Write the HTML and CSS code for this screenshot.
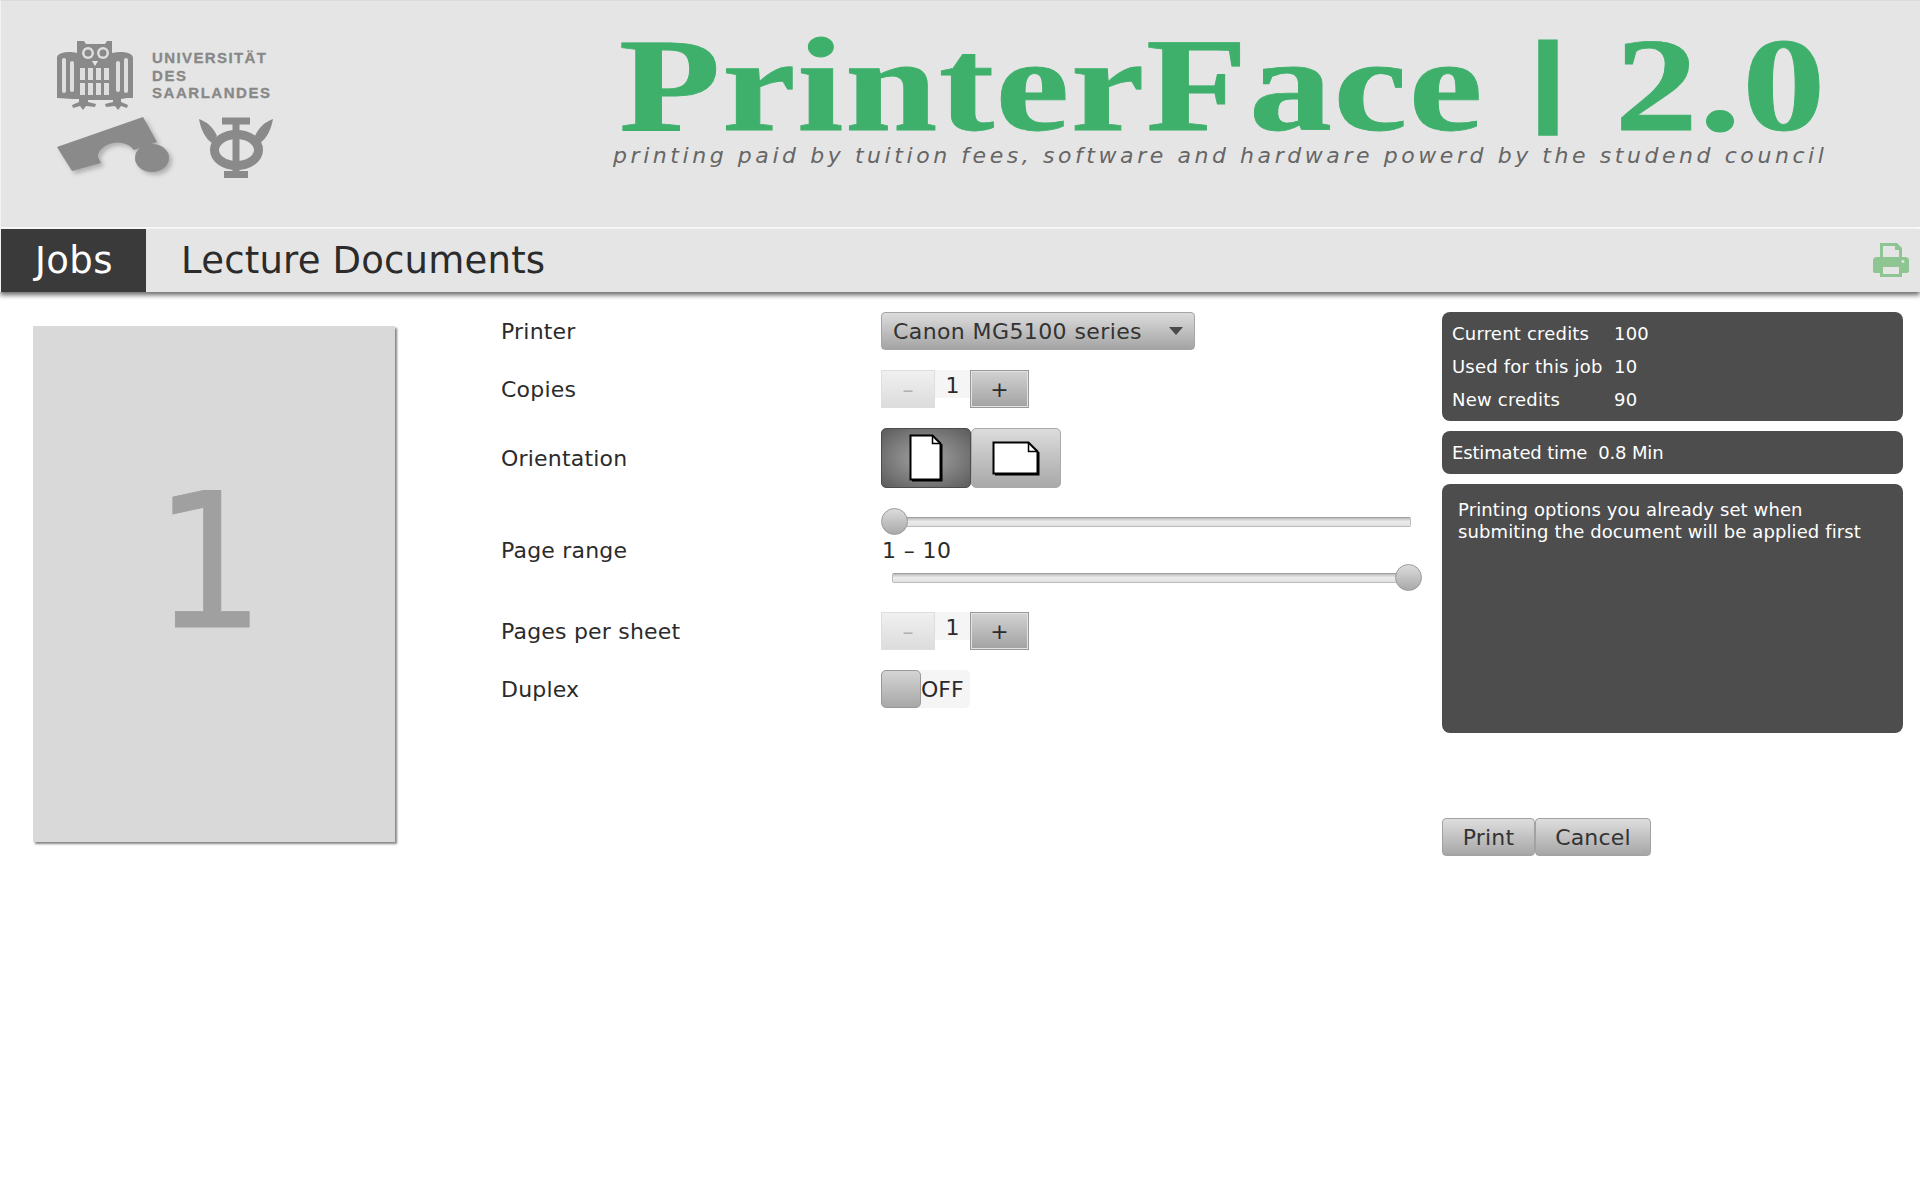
FILE: index.html
```html
<!DOCTYPE html>
<html lang="en">
<head>
<meta charset="utf-8">
<title>PrinterFace 2.0</title>
<link rel="stylesheet" href="styles.css">
</head>
<body>
<header class="banner">
  <svg class="logo" width="230" height="150" viewBox="50 35 230 150" aria-label="Universität des Saarlandes">
    <g class="owl">
      <path d="M77 41h7l2 3h19l2-3h5v12c4-1 6-1 9-1 0 0 12 0 12 6v40h-6l-6 1v3l7 3-1 3-6-2-3 4-3-4-9 1-1-3 8-2v-2H88v2l8 2-1 3-9-1-3 4-3-4-7 2-1-3 7-3v-3h-6l-16-1V58c0-6 12-6 12-6 3 0 5 0 8 1z"/>
      <g class="owl-light">
        <rect x="62" y="58" width="4" height="35" rx="2"/><rect x="70" y="61" width="4" height="31" rx="2"/>
        <rect x="116" y="61" width="4" height="31" rx="2"/><rect x="124" y="58" width="4" height="35" rx="2"/>
        <rect x="80" y="68" width="5" height="12"/><rect x="88" y="68" width="5" height="12"/><rect x="96" y="68" width="5" height="12"/><rect x="104" y="68" width="5" height="12"/>
        <rect x="80" y="83" width="5" height="12"/><rect x="88" y="83" width="5" height="12"/><rect x="96" y="83" width="5" height="12"/><rect x="104" y="83" width="5" height="12"/>
        <circle cx="88" cy="53" r="6"/><circle cx="103" cy="53" r="6"/>
      </g>
      <circle cx="88" cy="53" r="3.500"/><circle cx="103" cy="53" r="3.500"/>
      <path d="M92 61h6l-3 5z" class="owl-beak"/>
    </g>
    <text class="logo-text" x="152" y="63" textLength="114">UNIVERSITÄT</text>
    <text class="logo-text" x="152" y="81" textLength="34">DES</text>
    <text class="logo-text" x="152" y="98" textLength="118">SAARLANDES</text>
    <g class="fs-mark">
      <path d="M57 147 143 117 157 142 134 150C130 144 120 141 113 143 103 145 97 152 98 157L101 163 72 171z"/>
      <ellipse cx="152" cy="158" rx="17" ry="14"/>
    </g>
    <g class="phi">
      <path class="phi-fill" d="M199 119c8 3 14 8 18 17l-5 7c-7-5-11-13-13-24zM273 119c-8 3-14 8-18 17l5 7c7-5 11-13 13-24z"/>
      <ellipse class="phi-ring" cx="236.500" cy="150" rx="22" ry="15.500"/>
      <path class="phi-bar" d="M222 121h28M236 121v54M224 174.500h24"/>
    </g>
  </svg>
  <div class="brand">
    <h1 class="title">PrinterFace <span class="title-bar">|</span> 2.0</h1>
    <p class="tagline">printing paid by tuition fees, software and hardware powerd by the studend council</p>
  </div>
</header>
<nav class="tabs">
  <a class="tab tab-active">Jobs</a>
  <a class="tab">Lecture Documents</a>
  <svg class="printer-icon" width="36" height="34" viewBox="0 0 36 34" aria-label="Printer">
    <path fill-rule="evenodd" d="M7 0h17l5 5v9h3c2 0 4 1 4 3v11c0 1-1 2-2 2h-5v4H7v-4H2c-1 0-2-1-2-2V17c0-2 2-3 4-3h3zM10 3v11h16V7h-4V3zM10 24v7h16v-7zM30 17a1.500 1.500 0 1 0 .01 0z"/>
  </svg>
</nav>
<main class="content">
  <div class="preview"><span class="preview-num">1</span></div>
  <form class="form">
    <label class="label">Printer</label>
    <div class="select"><span>Canon MG5100 series</span><i class="caret"></i></div>

    <label class="label">Copies</label>
    <div class="stepper"><span class="step step-off">–</span><span class="step-val">1</span><span class="step step-on">+</span></div>

    <label class="label">Orientation</label>
    <div class="segments">
      <span class="seg seg-on">
        <svg width="34" height="48" viewBox="0 0 34 48"><path class="sheet" d="M1.500 1.500h22l8 8v36h-30z"/><path class="sheet-fold" d="M23.500 1.500v8h8"/><path class="sheet-edge" d="M3 46.500h29.500V10"/></svg>
      </span>
      <span class="seg">
        <svg width="48" height="35" viewBox="0 0 48 35"><path class="sheet" d="M1.500 1.500h35l9 9v22h-44z"/><path class="sheet-fold" d="M36.500 1.500v9h9"/><path class="sheet-edge" d="M3 33.500h43.500V11"/></svg>
      </span>
    </div>

    <label class="label">Page range</label>
    <div class="range">
      <div class="slider"><div class="track track-a"></div><span class="knob knob-a"></span></div>
      <div class="range-val">1 – 10</div>
      <div class="slider slider-b"><div class="track track-b"></div><span class="knob knob-b"></span></div>
    </div>

    <label class="label">Pages per sheet</label>
    <div class="stepper"><span class="step step-off">–</span><span class="step-val">1</span><span class="step step-on">+</span></div>

    <label class="label">Duplex</label>
    <div class="toggle"><span class="toggle-knob"></span><span class="toggle-text">OFF</span></div>
  </form>
  <aside class="side">
    <div class="panel credits">
      <span>Current credits</span><span>100</span>
      <span>Used for this job</span><span>10</span>
      <span>New credits</span><span>90</span>
    </div>
    <div class="panel estimate"><span>Estimated time</span><span>0.8 Min</span></div>
    <div class="panel note">Printing options you already set when<br>submiting the document will be applied first</div>
    <div class="actions"><button class="btn btn-print" type="button">Print</button><button class="btn btn-cancel" type="button">Cancel</button></div>
  </aside>
</main>
</body>
</html>
```
FILE: styles.css
```css
* { box-sizing: border-box; }
html, body { margin: 0; padding: 0; }
body {
  width: 1920px;
  height: 1200px;
  overflow: hidden;
  background: #fff;
  font-family: "DejaVu Sans", sans-serif;
  color: #2b2b2b;
}

/* banner */
.banner {
  height: 229px;
  display: flex;
  align-items: flex-start;
  background: #e5e5e5;
  border-bottom: 2px solid #fff;
  border-top: 1px solid #dcdcdc;
  border-left: 1px solid #f2f2f2;
  padding: 34px 0 0 49px;
}
.logo { flex: none; display: block; }
.owl path, .owl circle { fill: #8a8a8a; }
.owl-light rect, .owl-light circle { fill: #dedede; }
.owl .owl-beak { fill: #e5e5e5; }
.logo-text {
  font-family: "Liberation Sans", sans-serif;
  font-weight: 700;
  font-size: 15px;
  fill: #888;
  stroke: #888;
  stroke-width: .3px;
}
.fs-mark { fill: #8a8a8a; filter: drop-shadow(3px 3px 2px #b0b0b0); }
.phi { filter: blur(.5px); }
.phi-fill { fill: #8a8a8a; }
.phi-ring { fill: none; stroke: #8a8a8a; stroke-width: 9; }
.phi-bar { fill: none; stroke: #8a8a8a; stroke-width: 7; }

.brand { margin-left: 341px; }
.title {
  width: max-content;
  margin: 0 0 0 -2px;
  font-family: "Liberation Serif", serif;
  font-weight: 700;
  font-size: 134px;
  line-height: 100px;
  letter-spacing: 1.200px;
  color: #3fb06c;
  white-space: nowrap;
  -webkit-text-stroke: .8px #3fb06c;
  transform: scaleX(1.240);
  transform-origin: left top;
}
.title-bar {
  font-family: "Liberation Sans", sans-serif;
  font-size: 99px;
  line-height: 0;
  vertical-align: 18px;
  margin: 0 4px 0 3px;
  -webkit-text-stroke: 3px #3fb06c;
}
.tagline {
  margin: 8px 0 0 -8px;
  font-family: "DejaVu Sans", sans-serif;
  font-weight: 200;
  font-style: italic;
  font-size: 22px;
  line-height: 26px;
  letter-spacing: 3.570px;
  color: #666;
  white-space: nowrap;
}

/* tabs */
.tabs {
  position: relative;
  height: 63px;
  display: flex;
  align-items: stretch;
  background: #e5e5e5;
  border-left: 1px solid #f2f2f2;
  box-shadow: 0 3px 5px 0 rgba(0, 0, 0, .6);
}
.tab {
  display: flex;
  align-items: center;
  padding: 0 35px;
  font-size: 37px;
  letter-spacing: .2px;
  color: #2b2b2b;
}
.tab-active { width: 145px; background: #3a3a3a; color: #fff; padding: 0 0 0 34px; letter-spacing: .4px; }
.printer-icon {
  margin: 14px 11px 0 auto;
  fill: #8fc592;
}

/* main */
.content {
  display: flex;
  align-items: flex-start;
  padding-left: 33px;
}
.preview {
  flex: none;
  width: 362px;
  height: 516px;
  margin-top: 34px;
  padding-top: 143px;
  display: flex;
  align-items: flex-start;
  justify-content: center;
  background: #d9d9d9;
  box-shadow: 2px 2px 2px #858585;
}
.preview-num {
  font-size: 187px;
  line-height: 1;
  color: #a0a0a0;
  margin-left: -10px;
  -webkit-text-stroke: .8px #a0a0a0;
  transform: scaleX(.94);
}

.form {
  flex: none;
  width: 921px;
  margin-left: 106px;
  padding-top: 20px;
  display: grid;
  grid-template-columns: 380px 541px;
  row-gap: 20px;
  font-size: 22px;
}
.label { display: flex; align-items: center; padding-top: 1px; font-size: 22px; letter-spacing: .2px; }
.select {
  width: 314px;
  height: 38px;
  display: flex;
  align-items: center;
  justify-content: space-between;
  padding: 0 11px 0 11px;
  border: 1px solid #a5a5a5;
  border-radius: 4px;
  background: linear-gradient(#dcdcdc, #a4a4a4);
  color: #333;
  letter-spacing: .4px;
}
.caret {
  width: 0;
  height: 0;
  border-left: 7.500px solid transparent;
  border-right: 7.500px solid transparent;
  border-top: 8px solid #4a4a4a;
}
.stepper { display: flex; height: 38px; align-items: flex-start; }
.step {
  height: 38px;
  display: flex;
  align-items: center;
  justify-content: center;
  font-size: 22px;
}
.step-off {
  width: 54px;
  border: 1px solid #dedede;
  background: linear-gradient(#f0f0f0, #dcdcdc);
  color: #b0b0b0;
}
.step-val {
  width: 35px;
  height: 28px;
  line-height: 31px;
  text-align: center;
  background: #f5f5f5;
}
.step-on {
  width: 59px;
  border: 1px solid #999;
  box-shadow: inset 0 0 0 1px #e2e2e2;
  background: linear-gradient(#d2d2d2, #a2a2a2);
}
.segments { display: flex; height: 60px; }
.seg {
  width: 90px;
  display: flex;
  align-items: center;
  justify-content: center;
  border: 1px solid #a9a9a9;
  border-radius: 5px;
  background: linear-gradient(#dcdcdc, #a8a8a8);
}
.seg-on {
  border: 1px solid #4c4c4c;
  background: radial-gradient(ellipse at center, #909090 30%, #5b5b5b 100%);
}
.sheet { fill: #fff; stroke: #000; stroke-width: 2; }
.sheet-fold { fill: none; stroke: #000; stroke-width: 1.500; }
.sheet-edge { fill: none; stroke: #000; stroke-width: 2; }

.range { display: flex; flex-direction: column; margin-bottom: 1px; }
.slider { position: relative; width: 530px; height: 27px; }
.slider-b { margin-left: 11px; }
.track {
  height: 10px;
  margin-top: 9px;
  border: 1px solid #bcbcbc;
  border-top-color: #9e9e9e;
  border-radius: 2px;
  background: linear-gradient(#bdbdbd, #ececec 45%, #e0e0e0);
}
.track-a { margin-left: 24px; }
.track-b { margin-right: 24px; }
.knob {
  position: absolute;
  top: 0;
  width: 27px;
  height: 27px;
  border: 1px solid #999;
  border-radius: 50%;
  background: linear-gradient(#dcdcdc, #a9a9a9);
}
.knob-a { left: 0; }
.knob-b { right: 0; }
.range-val { height: 29px; line-height: 31px; padding-left: 1px; letter-spacing: .4px; }

.toggle {
  width: 89px;
  height: 38px;
  display: flex;
  align-items: center;
  border-radius: 5px;
  background: #f5f5f5;
}
.toggle-knob {
  width: 40px;
  height: 38px;
  border: 1px solid #999;
  border-radius: 5px;
  background: linear-gradient(#d4d4d4, #a8a8a8);
}
.toggle-text { margin-left: 0; }

/* right column */
.side {
  flex: none;
  width: 461px;
  margin-top: 20px;
  margin-left: 20px;
  display: flex;
  flex-direction: column;
  gap: 10px;
}
.panel {
  background: #4d4d4d;
  border-radius: 8px;
  color: #fff;
  font-size: 18px;
}
.credits {
  height: 109px;
  padding: 5px 10px 0;
  display: grid;
  grid-template-columns: 162px auto;
  grid-auto-rows: 33px;
  align-items: center;
  justify-content: start;
  letter-spacing: .2px;
}
.estimate {
  height: 43px;
  padding: 0 10px;
  display: flex;
  align-items: center;
  gap: 11px;
  letter-spacing: -.15px;
}
.note {
  height: 249px;
  padding: 15px 16px;
  line-height: 22px;
  letter-spacing: .11px;
}
.actions { display: flex; margin-top: 75px; }
.btn {
  height: 38px;
  padding: 0;
  border: 1px solid #a2a2a2;
  border-radius: 4px;
  background: linear-gradient(#dedede, #a6a6a6);
  font-family: "DejaVu Sans", sans-serif;
  font-size: 22px;
  letter-spacing: .2px;
  color: #333;
}
.btn-print { width: 93px; }
.btn-cancel { width: 116px; }
```
